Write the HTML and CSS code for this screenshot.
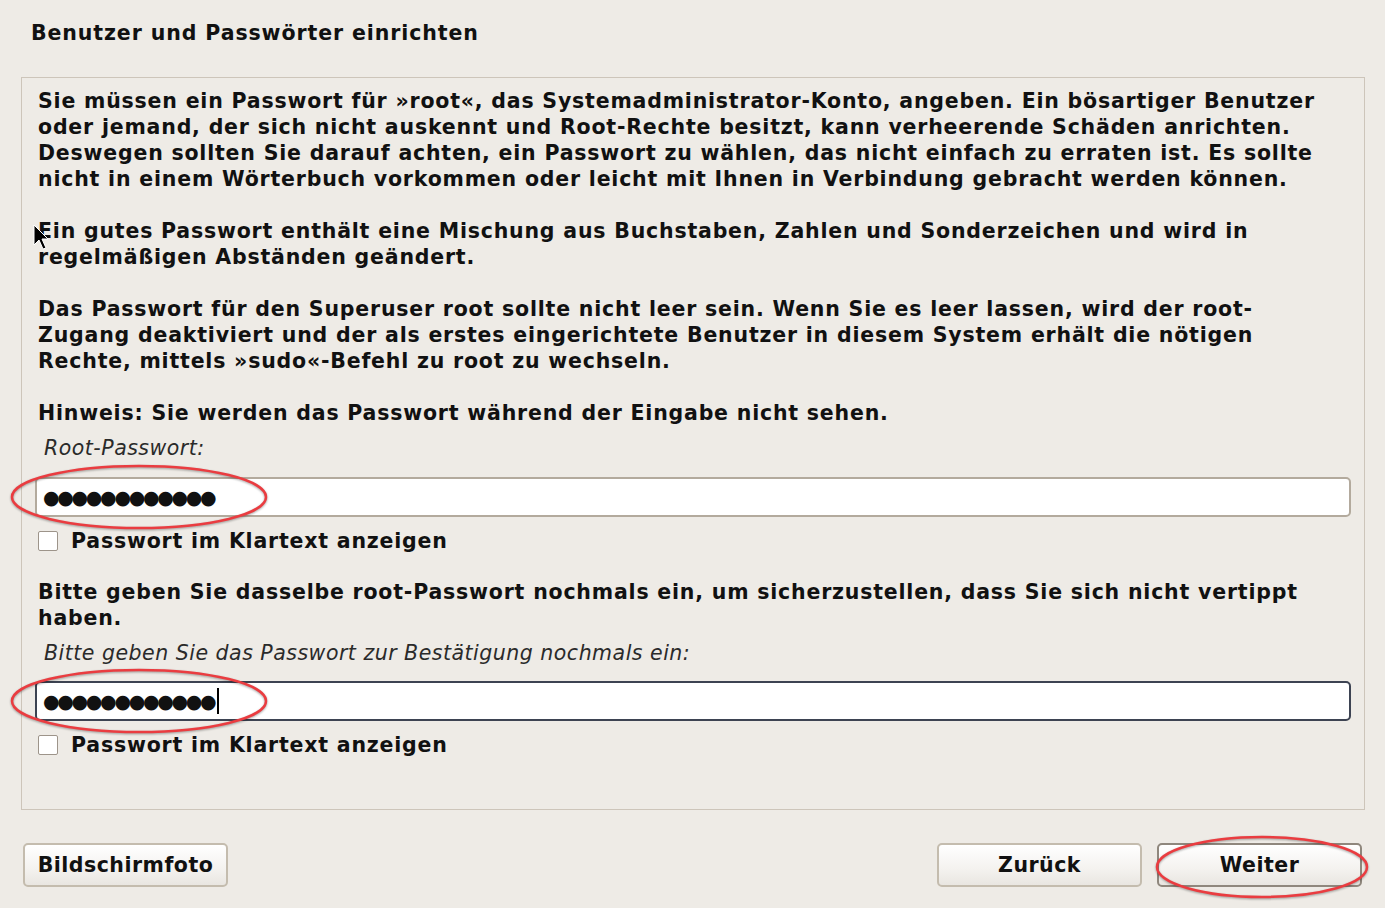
FILE: index.html
```html
<!DOCTYPE html>
<html>
<head>
	<meta charset="utf-8">
	<meta name="viewport" content="width=device-width, initial-scale=1">
	<title>Benutzer und Passwörter einrichten</title>
	<link rel="stylesheet" href="styles.css">
</head>
<body>

	<h1 class="title">Benutzer und Passwörter einrichten</h1>

	<div class="panel">
		<p class="para">Sie müssen ein Passwort für »root«, das Systemadministrator-Konto, angeben. Ein bösartiger Benutzer oder jemand, der sich nicht auskennt und Root-Rechte besitzt, kann verheerende Schäden anrichten. Deswegen sollten Sie darauf achten, ein Passwort zu wählen, das nicht einfach zu erraten ist. Es sollte nicht in einem Wörterbuch vorkommen oder leicht mit Ihnen in Verbindung gebracht werden können.</p>
		<p class="para">Ein gutes Passwort enthält eine Mischung aus Buchstaben, Zahlen und Sonderzeichen und wird in regelmäßigen Abständen geändert.</p>
		<p class="para">Das Passwort für den Superuser root sollte nicht leer sein. Wenn Sie es leer lassen, wird der root-Zugang deaktiviert und der als erstes eingerichtete Benutzer in diesem System erhält die nötigen Rechte, mittels »sudo«-Befehl zu root zu wechseln.</p>
		<p class="para last">Hinweis: Sie werden das Passwort während der Eingabe nicht sehen.</p>

		<div class="label">Root-Passwort:</div>
		<div class="entry"><span class="dots">●●●●●●●●●●●●</span></div>
		<label class="check"><span class="box"></span>Passwort im Klartext anzeigen</label>

		<p class="para last again">Bitte geben Sie dasselbe root-Passwort nochmals ein, um sicherzustellen, dass Sie sich nicht vertippt haben.</p>
		<div class="label second">Bitte geben Sie das Passwort zur Bestätigung nochmals ein:</div>
		<div class="entry focus"><span class="dots">●●●●●●●●●●●●</span><span class="caret"></span></div>
		<label class="check"><span class="box"></span>Passwort im Klartext anzeigen</label>
	</div>

	<div class="footer">
		<button class="btn">Bildschirmfoto</button>
		<div class="spacer"></div>
		<button class="btn">Zurück</button>
		<button class="btn default">Weiter</button>
	</div>

	<!-- annotations drawn over the screenshot -->
	<svg class="marks" width="1385" height="908" viewBox="0 0 1385 908">
		<ellipse cx="139" cy="497" rx="127" ry="31"/>
		<ellipse cx="139" cy="701" rx="127" ry="31"/>
		<ellipse cx="1262" cy="867" rx="105" ry="30"/>
	</svg>

	<svg class="pointer" width="16" height="27" viewBox="0 0 16 27">
		<path d="M1 1 L1 21 L6 16 L10 25 L13 24 L9 15 L15 15 Z"/>
	</svg>

</body>
</html>
```

FILE: styles.css
```css
html, body{
	margin: 0;
	padding: 0;
}
body{
	background: #eeebe6;
	font-family: "DejaVu Sans", sans-serif;
	color: #111;
	width: 1385px;
	height: 908px;
	position: relative;
	overflow: hidden;
}
.title{
	font-size: 20.5px;
	font-weight: bold;
	margin: 0;
	padding: 20px 0 0 31px;
	line-height: 26px;
	height: 57px;
	letter-spacing: 0.9px;
}
.panel{
	margin-left: 21px;
	width: 1344px;
	height: 733px;
	border: 1px solid #cdc5ba;
	padding: 10px 0 0 0;
	box-sizing: border-box;
}
.para{
	font-size: 20.5px;
	font-weight: bold;
	line-height: 26px;
	margin: 0 0 26px 0;
	padding: 0 38px 0 16px;
	letter-spacing: 0.8px;
}
.para.last{
	margin-bottom: 10px;
}
.para.again{
	margin-top: 25px;
}
.label{
	font-size: 20.5px;
	font-style: italic;
	line-height: 24px;
	color: #2a2a2a;
	padding-left: 22px;
	margin-bottom: 17px;
	letter-spacing: 0.5px;
}
.label.second{
	margin-bottom: 16px;
}
.entry{
	margin-left: 13px;
	width: 1316px;
	height: 40px;
	box-sizing: border-box;
	background: #fff;
	border: 2px solid #b3aa9d;
	border-radius: 5px;
	display: flex;
	align-items: center;
	padding-left: 6px;
}
.entry.focus{
	border-color: #3d4352;
}
.dots{
	font-size: 19px;
	letter-spacing: -2.3px;
	line-height: 1;
}
.caret{
	display: inline-block;
	width: 2px;
	height: 26px;
	background: #000;
	margin-left: 3px;
}
.check{
	display: flex;
	align-items: center;
	margin: 11px 0 0 16px;
	font-size: 20.5px;
	font-weight: bold;
	line-height: 26px;
	letter-spacing: 0.8px;
}
.box{
	width: 18px;
	height: 18px;
	border: 1px solid #9d948a;
	border-radius: 2px;
	background: #fff;
	margin-right: 13px;
}
.footer{
	display: flex;
	gap: 15px;
	padding: 33px 23px 0 23px;
}
.spacer{
	flex: 1;
}
.btn{
	width: 205px;
	height: 44px;
	font-family: "DejaVu Sans", sans-serif;
	font-size: 20.5px;
	font-weight: bold;
	letter-spacing: 0.5px;
	color: #111;
	border: 2px solid #c4bcae;
	border-radius: 5px;
	background: linear-gradient(#ffffff, #f4f2ef 60%, #e9e6e1);
	padding: 0;
}
.btn.default{
	border-color: #8f877d;
}
.marks{
	position: absolute;
	left: 0;
	top: 0;
	pointer-events: none;
	filter: drop-shadow(0 1px 1px rgba(0,0,0,0.35));
}
.marks ellipse{
	fill: none;
	stroke: #ea3c40;
	stroke-width: 2.5;
}
.pointer{
	position: absolute;
	left: 33px;
	top: 224px;
}
.pointer path{
	fill: #000;
	stroke: #fff;
	stroke-width: 1;
}
```
